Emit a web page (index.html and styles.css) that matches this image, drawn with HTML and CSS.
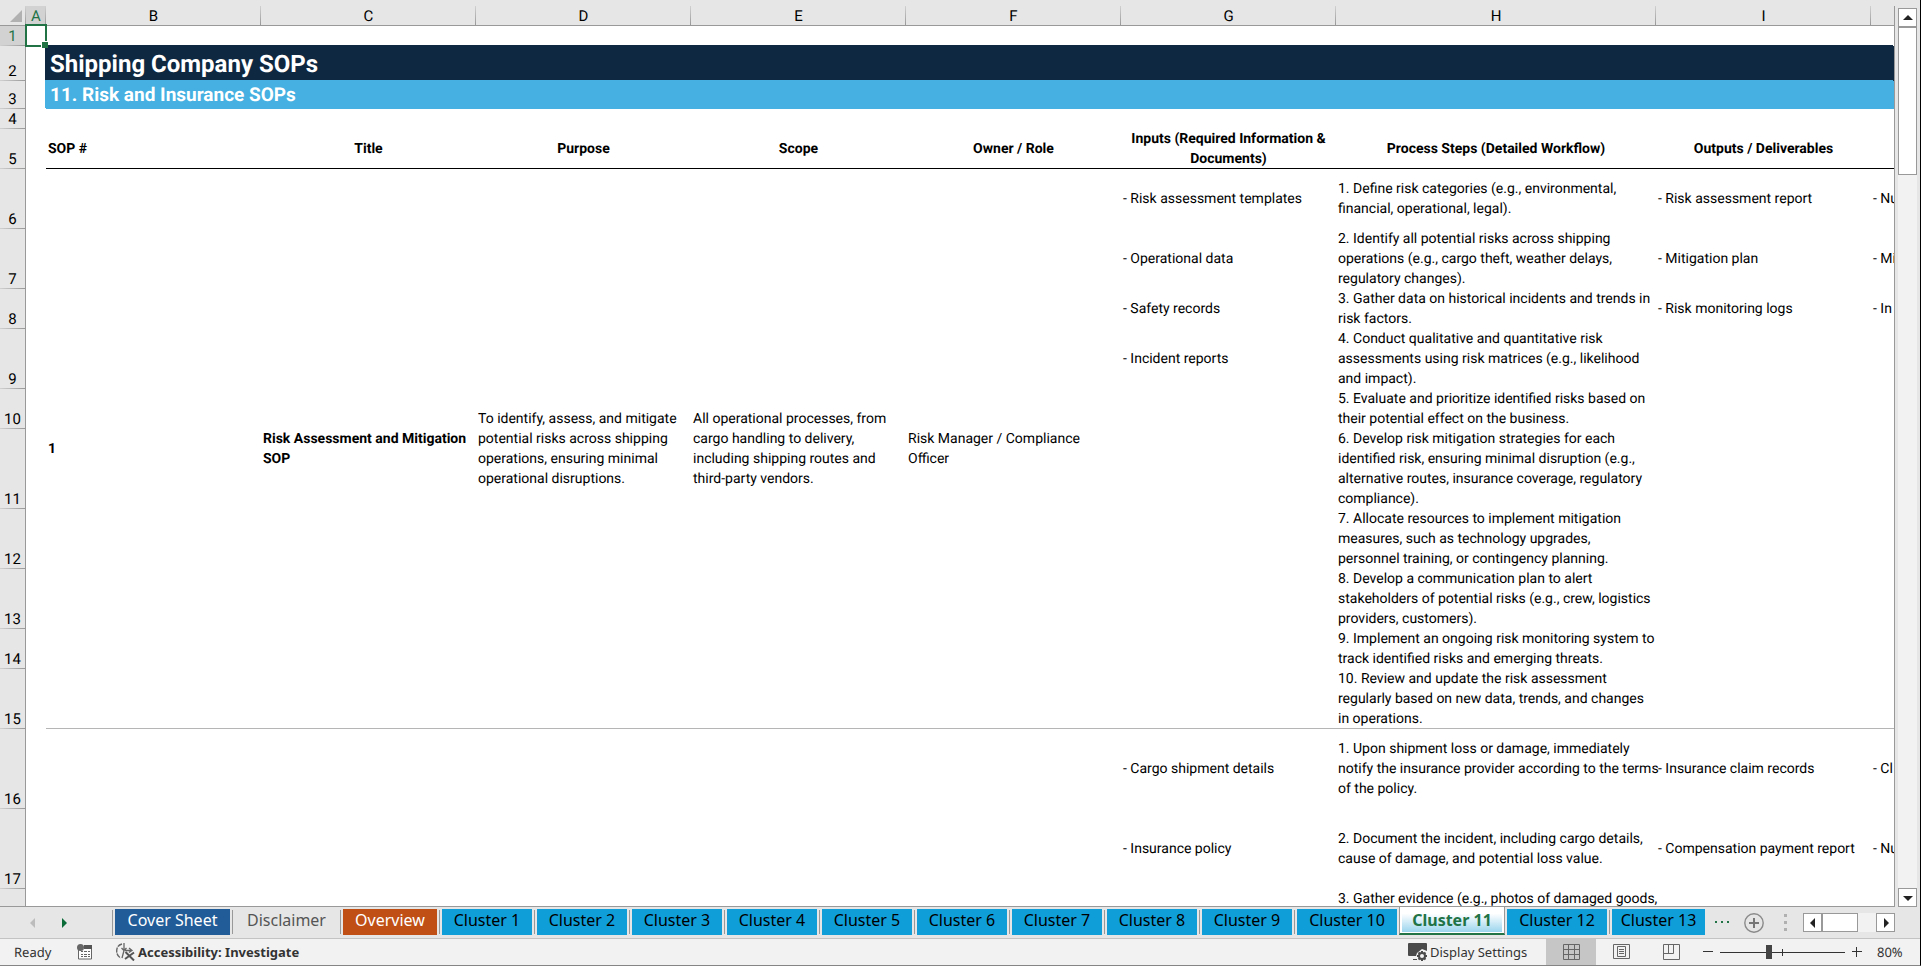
FILE: index.html
```html
<!DOCTYPE html>
<html lang="en">
<head>
    <meta charset="UTF-8">
    <meta name="viewport" content="width=device-width, initial-scale=1.0">
    <title>Shipping Company SOPs</title>
    <link rel="stylesheet" href="styles.css">
</head>
<body>
    <div class="workspace">
        <!-- Worksheet grid -->
        <main class="sheet">
            <table class="grid">
                <colgroup>
                    <col class="col-head">
                    <col class="col-a">
                    <col class="col-std">
                    <col class="col-std">
                    <col class="col-std">
                    <col class="col-std">
                    <col class="col-std">
                    <col class="col-std">
                    <col class="col-wide">
                    <col class="col-std">
                    <col>
                </colgroup>
                <thead>
                    <tr class="letters">
                        <td class="corner"><svg width="26" height="18" viewBox="0 0 26 18"><path d="M22 3v12H10z" fill="#b1b1b1"/></svg></td>
                        <th class="selected" scope="col">A</th>
                        <th scope="col">B</th>
                        <th scope="col">C</th>
                        <th scope="col">D</th>
                        <th scope="col">E</th>
                        <th scope="col">F</th>
                        <th scope="col">G</th>
                        <th scope="col">H</th>
                        <th scope="col">I</th>
                        <th scope="col"></th>
                    </tr>
                </thead>
                <tbody>
                    <tr class="h20"><th class="selected" scope="row">1</th><td class="active-cell"></td><td colspan="9"></td></tr>
                    <tr class="h35"><th scope="row">2</th><td></td><td class="banner banner-title" colspan="9">Shipping Company SOPs</td></tr>
                    <tr class="h28"><th scope="row">3</th><td></td><td class="banner banner-sub" colspan="9">11. Risk and Insurance SOPs</td></tr>
                    <tr class="h20"><th scope="row">4</th><td></td><td colspan="9"></td></tr>
                    <tr class="h40 headings">
                        <th scope="row">5</th>
                        <td></td>
                        <td class="left">SOP #</td>
                        <td>Title</td>
                        <td>Purpose</td>
                        <td>Scope</td>
                        <td>Owner / Role</td>
                        <td>Inputs (Required Information &amp;<br>Documents)</td>
                        <td>Process Steps (Detailed Workflow)</td>
                        <td>Outputs / Deliverables</td>
                        <td></td>
                    </tr>

                    <!-- SOP 1 -->
                    <tr class="h60">
                        <th scope="row">6</th>
                        <td rowspan="10"></td>
                        <td class="bold end" rowspan="10">1</td>
                        <td class="bold end" rowspan="10">Risk Assessment and Mitigation<br>SOP</td>
                        <td class="end" rowspan="10">To identify, assess, and mitigate<br>potential risks across shipping<br>operations, ensuring minimal<br>operational disruptions.</td>
                        <td class="end" rowspan="10">All operational processes, from<br>cargo handling to delivery,<br>including shipping routes and<br>third-party vendors.</td>
                        <td class="end" rowspan="10">Risk Manager / Compliance<br>Officer</td>
                        <td>- Risk assessment templates</td>
                        <td>1. Define risk categories (e.g., environmental,<br>financial, operational, legal).</td>
                        <td>- Risk assessment report</td>
                        <td>- Nu</td>
                    </tr>
                    <tr class="h60">
                        <th scope="row">7</th>
                        <td>- Operational data</td>
                        <td>2. Identify all potential risks across shipping<br>operations (e.g., cargo theft, weather delays,<br>regulatory changes).</td>
                        <td>- Mitigation plan</td>
                        <td>- Mi</td>
                    </tr>
                    <tr class="h40">
                        <th scope="row">8</th>
                        <td>- Safety records</td>
                        <td>3. Gather data on historical incidents and trends in<br>risk factors.</td>
                        <td>- Risk monitoring logs</td>
                        <td>- In</td>
                    </tr>
                    <tr class="h60">
                        <th scope="row">9</th>
                        <td>- Incident reports</td>
                        <td>4. Conduct qualitative and quantitative risk<br>assessments using risk matrices (e.g., likelihood<br>and impact).</td>
                        <td></td>
                        <td></td>
                    </tr>
                    <tr class="h40">
                        <th scope="row">10</th>
                        <td></td>
                        <td>5. Evaluate and prioritize identified risks based on<br>their potential effect on the business.</td>
                        <td></td>
                        <td></td>
                    </tr>
                    <tr class="h80">
                        <th scope="row">11</th>
                        <td></td>
                        <td>6. Develop risk mitigation strategies for each<br>identified risk, ensuring minimal disruption (e.g.,<br>alternative routes, insurance coverage, regulatory<br>compliance).</td>
                        <td></td>
                        <td></td>
                    </tr>
                    <tr class="h60">
                        <th scope="row">12</th>
                        <td></td>
                        <td>7. Allocate resources to implement mitigation<br>measures, such as technology upgrades,<br>personnel training, or contingency planning.</td>
                        <td></td>
                        <td></td>
                    </tr>
                    <tr class="h60">
                        <th scope="row">13</th>
                        <td></td>
                        <td>8. Develop a communication plan to alert<br>stakeholders of potential risks (e.g., crew, logistics<br>providers, customers).</td>
                        <td></td>
                        <td></td>
                    </tr>
                    <tr class="h40">
                        <th scope="row">14</th>
                        <td></td>
                        <td>9. Implement an ongoing risk monitoring system to<br>track identified risks and emerging threats.</td>
                        <td></td>
                        <td></td>
                    </tr>
                    <tr class="h60">
                        <th scope="row">15</th>
                        <td class="end"></td>
                        <td class="end">10. Review and update the risk assessment<br>regularly based on new data, trends, and changes<br>in operations.</td>
                        <td class="end"></td>
                        <td class="end"></td>
                    </tr>

                    <!-- SOP 2 -->
                    <tr class="h80">
                        <th scope="row">16</th>
                        <td colspan="6"></td>
                        <td>- Cargo shipment details</td>
                        <td>1. Upon shipment loss or damage, immediately<br>notify the insurance provider according to the terms<br>of the policy.</td>
                        <td>- Insurance claim records</td>
                        <td>- Cl</td>
                    </tr>
                    <tr class="h80">
                        <th scope="row">17</th>
                        <td colspan="6"></td>
                        <td>- Insurance policy</td>
                        <td>2. Document the incident, including cargo details,<br>cause of damage, and potential loss value.</td>
                        <td>- Compensation payment report</td>
                        <td>- Nu</td>
                    </tr>
                    <tr class="h20">
                        <th scope="row"></th>
                        <td colspan="6"></td>
                        <td></td>
                        <td>3. Gather evidence (e.g., photos of damaged goods,</td>
                        <td></td>
                        <td></td>
                    </tr>
                </tbody>
            </table>
        </main>

        <!-- Vertical scrollbar -->
        <div class="vscroll">
            <button class="scroll-btn" aria-label="Scroll up"><svg width="10" height="6" viewBox="0 0 10 6"><path d="M5 0l5 5H0z" fill="#222"/></svg></button>
            <div class="vthumb"></div>
            <div class="vtrack"></div>
            <button class="scroll-btn" aria-label="Scroll down"><svg width="10" height="6" viewBox="0 0 10 6"><path d="M5 6L0 1h10z" fill="#222"/></svg></button>
        </div>
    </div>

    <!-- Sheet tabs -->
    <nav class="tabbar">
        <div class="tab-nav">
            <button aria-label="Previous sheets"><svg width="6" height="10" viewBox="0 0 6 10"><path d="M5 0v10L0 5z" fill="#bcbcbc"/></svg></button>
            <button aria-label="Next sheets"><svg width="6" height="10" viewBox="0 0 6 10"><path d="M0 0v10l5-5z" fill="#0b6b38"/></svg></button>
        </div>
        <div class="tabs">
            <button class="tab tab-cover">Cover Sheet</button>
            <button class="tab tab-plain">Disclaimer</button>
            <button class="tab tab-overview">Overview</button>
            <button class="tab">Cluster 1</button>
            <button class="tab">Cluster 2</button>
            <button class="tab">Cluster 3</button>
            <button class="tab">Cluster 4</button>
            <button class="tab">Cluster 5</button>
            <button class="tab">Cluster 6</button>
            <button class="tab">Cluster 7</button>
            <button class="tab">Cluster 8</button>
            <button class="tab">Cluster 9</button>
            <button class="tab tab-long before-active">Cluster 10</button>
            <button class="tab tab-active">Cluster 11</button>
            <button class="tab tab-long">Cluster 12</button>
            <button class="tab tab-cut">Cluster 13</button>
        </div>
        <button class="more" aria-label="More sheets"><svg width="14" height="3" viewBox="0 0 14 3"><path d="M0 0h2v2H0zM6 0h2v2H6zM12 0h2v2h-2z" fill="#217346"/></svg></button>
        <button class="add" aria-label="New sheet"><svg width="20" height="20" viewBox="0 0 20 20" fill="none" stroke="#8a8a8a"><circle cx="10" cy="10" r="9.2" stroke-width="1.4"/><path d="M10 5v10M5 10h10" stroke="#777" stroke-width="2"/></svg></button>
        <svg class="grip" width="3" height="17" viewBox="0 0 3 17"><path d="M0 0h3v3H0zM0 7h3v3H0zM0 14h3v3H0z" fill="#b0b0b0"/></svg>
        <div class="hscroll">
            <button class="scroll-btn" aria-label="Scroll left"><svg width="6" height="10" viewBox="0 0 6 10"><path d="M5 0v10L0 5z" fill="#222"/></svg></button>
            <div class="hthumb"></div>
            <div class="htrack"></div>
            <button class="scroll-btn" aria-label="Scroll right"><svg width="6" height="10" viewBox="0 0 6 10"><path d="M1 0v10l5-5z" fill="#222"/></svg></button>
        </div>
    </nav>

    <!-- Status bar -->
    <footer class="status">
        <span class="ready">Ready</span>
        <button class="macro" aria-label="Record macro">
            <svg width="16" height="16" viewBox="0 0 16 16"><path d="M1.5 5v10h13V5" fill="#fff" stroke="#666"/><path d="M7 1h8v4H7z" fill="#555"/><circle cx="3.500" cy="3.500" r="3.500" fill="#666"/><path d="M4 7h2v1H4zM7 7h3v1H7zM11 7h2v1h-2zM4 10h2v1H4zM7 10h3v1H7zM11 10h2v1h-2zM4 12h2v1H4zM7 12h3v1H7zM11 12h2v1h-2z" fill="#666"/></svg>
        </button>
        <button class="access">
            <svg width="20" height="18" viewBox="0 0 20 18" fill="none" stroke="#666"><path d="M6 1C2 2 .7 5 .7 8S2 14 5 15" stroke-width="1.400" stroke-dasharray="5 1"/><path d="M8 0v7M5.500 5L8 7.500 10.500 5M9 7.500h7M13 5l3 2.500-3 2M8 7.500L6 15" stroke-width="1.300"/><path d="M9.500 9l8.500 8.500M18 9.500L9 16" stroke="#555" stroke-width="2"/></svg>
            <span>Accessibility: Investigate</span>
        </button>
        <div class="status-right">
            <button class="display">
                <svg width="20" height="18" viewBox="0 0 20 18"><path d="M1 0h17a1 1 0 0 1 1 1v7l-5-2-5 4-1 3H1a1 1 0 0 1-1-1V1a1 1 0 0 1 1-1zM5 16h4v1H5z" fill="#4a4a4a"/><circle cx="14" cy="13" r="3" fill="none" stroke="#4a4a4a" stroke-width="2"/><path d="M14 8v2M14 16v2M9 13h2M17 13h2M10.500 9.500l1.300 1.300M16.200 15.200l1.300 1.300M17.500 9.500l-1.300 1.300M11.800 15.200l-1.300 1.300" stroke="#4a4a4a" stroke-width="2"/></svg>
                <span>Display Settings</span>
            </button>
            <button class="view view-on" aria-label="Normal view"><svg width="17" height="16" viewBox="0 0 17 16" fill="none" stroke="#666"><path d="M.5.5h16v15H.5zM5.500.5v15M11.500.5v15M.5 5.500h16M.5 10.500h16"/></svg></button>
            <button class="view" aria-label="Page layout view"><svg width="17" height="16" viewBox="0 0 17 16" fill="none" stroke="#666"><path d="M.5.5h16v14H.5zM4.500 2.500h8v10h-8zM6 5.500h5M6 7.500h5M6 9.500h5"/></svg></button>
            <button class="view" aria-label="Page break preview"><svg width="17" height="16" viewBox="0 0 17 16" fill="none" stroke="#666"><path d="M.5.5h16v15H.5zM.5 9.500h10v-9M5.500.5v9"/></svg></button>
            <button class="zoom-btn" aria-label="Zoom out"><svg width="10" height="10" viewBox="0 0 10 10"><path d="M0 4.500h10" stroke="#333"/></svg></button>
            <input class="zoom" type="range" min="0" max="100" value="39" aria-label="Zoom">
            <button class="zoom-btn" aria-label="Zoom in"><svg width="10" height="10" viewBox="0 0 10 10"><path d="M0 4.500h10M4.500 0v10" stroke="#333"/></svg></button>
            <span class="percent">80%</span>
        </div>
    </footer>
</body>
</html>
```
FILE: styles.css
```css
* {
    margin: 0;
    padding: 0;
    box-sizing: border-box;
}

body {
    display: flex;
    flex-direction: column;
    height: 100vh;
    overflow: hidden;
    background: #e6e6e6;
    border-right: 1px solid #000;
    border-bottom: 1px solid #858585;
    color: #000;
    font-family: "Noto Sans", sans-serif;
    text-rendering: geometricPrecision;
}

button {
    border: none;
    background: none;
    color: inherit;
    font: inherit;
}

svg {
    display: block;
    flex: none;
}

/* Worksheet */
.workspace {
    flex: 1;
    display: flex;
    min-height: 0;
}

.sheet {
    flex: 1;
    min-width: 0;
    margin-top: 6px;
    overflow: hidden;
    background: #fff;
    border-right: 1px solid #999;
    border-bottom: 1px solid #999;
}

.grid {
    width: 100%;
    table-layout: fixed;
    border-spacing: 0;
    font-family: Roboto, sans-serif;
    font-size: 14px;
    line-height: 20px;
}

.col-head { width: 26px; }
.col-a { width: 20px; }
.col-std { width: 215px; }
.col-wide { width: 320px; }

.grid th,
.grid td {
    white-space: nowrap;
    text-align: left;
}

.grid td {
    padding-left: 2px;
}

/* Column letters and row numbers */
.letters {
    height: 20px;
}

.grid .letters th,
.grid .corner {
    padding: 0;
    background: linear-gradient(#d0d0d0, #999) right / 1px 100% no-repeat #e6e6e6;
    border-bottom: 1px solid #999;
    font-size: 15px;
    line-height: 17px;
    font-weight: normal;
    text-align: center;
}

.grid .letters th {
    padding-top: 2px;
}

.grid .letters th:last-child {
    background: #e6e6e6;
}

.grid tbody th {
    background: linear-gradient(to right, #d0d0d0, #999) bottom / 100% 1px no-repeat #e6e6e6;
    border-right: 1px solid #999;
    font-size: 15px;
    line-height: 20px;
    font-weight: normal;
    text-align: center;
    vertical-align: bottom;
}

.grid .letters .selected,
.grid tbody .selected {
    background-color: #d2d2d2;
    color: #217346;
}

.h20 { height: 20px; }
.h28 { height: 28px; }
.h35 { height: 35px; }
.h40 { height: 40px; }
.h60 { height: 60px; }
.h80 { height: 80px; }

.grid .active-cell {
    position: relative;
}

.active-cell::before {
    content: "";
    position: absolute;
    inset: -2px -1px -1px -1px;
    border: 2px solid #217346;
}

.active-cell::after {
    content: "";
    position: absolute;
    z-index: 1;
    right: -2px;
    bottom: -2px;
    width: 6px;
    height: 6px;
    background: #217346;
    border: solid #fff;
    border-width: 1px 0 0 1px;
}

.grid .banner {
    padding-left: 4px;
    color: #fff;
    font-weight: bold;
}

.banner-title {
    background: #0f2841;
    box-shadow: -1px -1px 0 #0f2841;
    font-size: 24px;
    line-height: 34px;
}

.banner-sub {
    background: #45b0e1;
    box-shadow: -1px -1px 0 #45b0e1;
    font-size: 19px;
    line-height: 26px;
}

.grid .headings td {
    padding: 0;
    box-shadow: inset 0 -1px 0 #000;
    font-weight: bold;
    text-align: center;
}

.grid .headings td:nth-child(2) {
    box-shadow: none;
}

.grid .headings .left {
    padding-left: 2px;
    text-align: left;
}

.bold {
    font-weight: bold;
}

.end {
    box-shadow: inset 0 -1px 0 #b5b5b5;
}

/* Scrollbars */
.scroll-btn {
    display: flex;
    flex: none;
    align-items: center;
    justify-content: center;
    width: 19px;
    height: 19px;
    background: #fff;
    border: 1px solid #999;
}

.vscroll {
    display: flex;
    flex-direction: column;
    width: 25px;
    padding: 8px 3px 0 3px;
}

.vthumb {
    height: 148px;
    background: #fff;
    border: 1px solid #999;
}

.vtrack {
    flex: 1;
    background: #f2f2f2;
}

.hscroll {
    display: flex;
    width: 92px;
    margin-right: 25px;
}

.hthumb {
    width: 36px;
    height: 19px;
    background: #fff;
    border: 1px solid #999;
}

.htrack {
    flex: 1;
    background: #f2f2f2;
}

/* Sheet tabs */
.tabbar {
    display: flex;
    align-items: center;
    height: 32px;
    border-bottom: 1px solid #c3c3c3;
}

.tab-nav {
    display: flex;
    gap: 26px;
    width: 112px;
    padding-left: 30px;
}

.tabs {
    display: flex;
    align-self: stretch;
    border-left: 1px solid #999;
    border-image: linear-gradient(transparent 4px, #999 4px, #999 28px, transparent 28px) 1;
}

.tab {
    position: relative;
    width: 90px;
    height: 26px;
    margin: 2px 3px 0 2px;
    padding-bottom: 4px;
    background: #109ed9;
    font-size: 16px;
    line-height: 22px;
    white-space: nowrap;
}

.tab::after {
    content: "";
    position: absolute;
    top: 1px;
    right: -3px;
    width: 1px;
    height: 24px;
    background: #999;
}

.tab-cover {
    width: 115px;
    background: #215c98;
    color: #fff;
}

.tab-plain {
    width: 103px;
    background: none;
    color: #555;
}

.tab-overview {
    width: 94px;
    background: #c04f15;
    color: #fff;
}

.tab-long {
    width: 100px;
}

.before-active {
    margin-right: 2px;
}

.tab-active {
    width: 106px;
    height: 28px;
    margin: 0;
    padding: 2px 0 2px;
    border: 1px solid #999;
    border-width: 0 1px 2px 1px;
    border-bottom-color: #217346;
    background: linear-gradient(#fff 20%, #9bd5ee) center 2px / 100px 23px no-repeat #fff;
    color: #217346;
    font-weight: bold;
}

.before-active::after,
.tab-active::after,
.tab-cut::after {
    display: none;
}

.tab-cut {
    width: 93px;
}

.more {
    margin-left: 7px;
}

.add {
    margin-left: 15px;
}

.grip {
    margin: 0 auto 0 20px;
}

/* Status bar */
.status {
    display: flex;
    align-items: center;
    height: 26px;
    padding-left: 14px;
    background: #f2f2f2;
    color: #333;
    font-size: 13px;
    line-height: 20px;
}

.ready {
    width: 63px;
}

.macro {
    width: 39px;
}

.access,
.display {
    display: flex;
    align-items: center;
    gap: 2px;
}

.access {
    font-weight: bold;
}

.status-right {
    display: flex;
    align-items: center;
    align-self: stretch;
    margin-left: auto;
}

.display {
    width: 138px;
}

.view {
    display: flex;
    align-items: center;
    justify-content: center;
    align-self: stretch;
    width: 50px;
}

.view-on {
    background: #c6c6c6;
}

.zoom-btn {
    display: flex;
    justify-content: center;
    width: 24px;
}

.zoom {
    appearance: none;
    width: 125px;
    height: 16px;
    background:
        linear-gradient(#333, #333) center / 1px 7px no-repeat,
        linear-gradient(#333, #333) center / 100% 1px no-repeat;
}

.zoom::-webkit-slider-thumb {
    appearance: none;
    width: 6px;
    height: 14px;
    background: #444;
}

.percent {
    width: 51px;
    padding-left: 8px;
}
```
